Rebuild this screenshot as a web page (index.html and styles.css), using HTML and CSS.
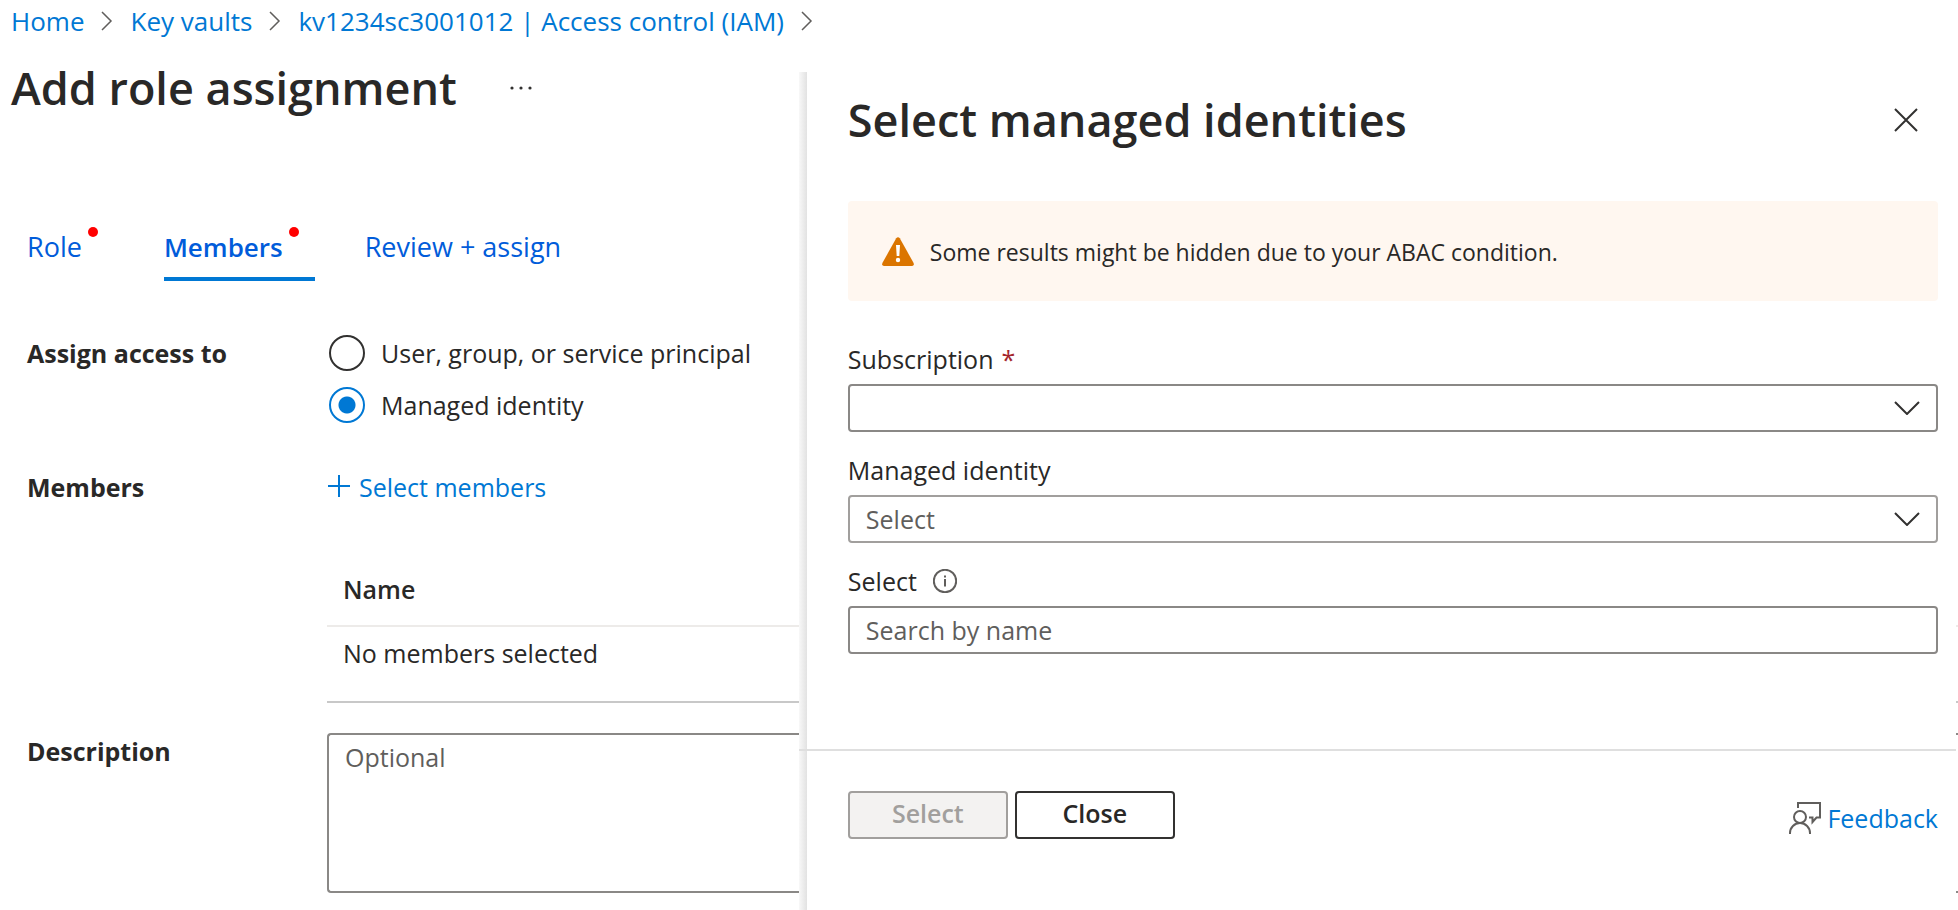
FILE: index.html
```html
<!DOCTYPE html>
<html lang="en">
<head>
<meta charset="utf-8">
<title>Add role assignment</title>
<link rel="stylesheet" href="styles.css">
</head>
<body>
<div class="page">
  <nav class="breadcrumb" aria-label="Breadcrumb">
    <a href="#">Home</a>
    <svg class="crumb-sep" viewBox="0 0 12 20" aria-hidden="true"><path d="M1 1l9 9-9 9"/></svg>
    <a href="#">Key vaults</a>
    <svg class="crumb-sep" viewBox="0 0 12 20" aria-hidden="true"><path d="M1 1l9 9-9 9"/></svg>
    <a href="#">kv1234sc3001012 | Access control (IAM)</a>
    <svg class="crumb-sep" viewBox="0 0 12 20" aria-hidden="true"><path d="M1 1l9 9-9 9"/></svg>
  </nav>

  <header class="page-header">
    <h1 class="title">Add role assignment</h1>
    <button class="icon-button" type="button" aria-label="More">
      <svg class="more-icon" viewBox="0 0 24 4" aria-hidden="true"><circle cx="3" cy="2" r="1.6"/><circle cx="12" cy="2" r="1.6"/><circle cx="21" cy="2" r="1.6"/></svg>
    </button>
  </header>

  <nav class="tabs" aria-label="Steps">
    <a class="tab has-dot" href="#">Role</a>
    <a class="tab has-dot active" href="#">Members</a>
    <a class="tab" href="#">Review + assign</a>
  </nav>

  <main class="form">
    <div class="row row-access">
      <span class="row-label" id="access-label">Assign access to</span>
      <div class="radios" role="radiogroup" aria-labelledby="access-label">
        <label class="radio"><input type="radio" name="access">User, group, or service principal</label>
        <label class="radio"><input type="radio" name="access" checked>Managed identity</label>
      </div>
    </div>
    <div class="row row-members">
      <span class="row-label">Members</span>
      <div class="members">
        <a class="add-link" href="#"><svg class="plus-icon" viewBox="0 0 24 24" aria-hidden="true"><path d="M12 0v22M1 11h22"/></svg>Select members</a>
        <table class="members-table">
          <thead><tr><th>Name</th></tr></thead>
          <tbody><tr><td>No members selected</td></tr></tbody>
        </table>
      </div>
    </div>
    <div class="row">
      <label class="row-label" for="description">Description</label>
      <textarea class="description" id="description" placeholder="Optional"></textarea>
    </div>
  </main>
</div>

<aside class="panel" aria-labelledby="panel-title">
  <div class="panel-body">
    <header class="panel-header">
      <h2 class="title" id="panel-title">Select managed identities</h2>
      <button class="icon-button close-button" type="button" aria-label="Close panel">
        <svg class="close-icon" viewBox="0 0 24 24" aria-hidden="true"><path d="M1 1l22 22M23 1L1 23"/></svg>
      </button>
    </header>
    <div class="banner" role="status">
      <svg class="warning-icon" viewBox="0 0 32 29" aria-hidden="true"><path class="warning-shape" d="M14.200 1.200Q16-.8 17.800 1.200L31.600 26Q32.400 29 30 29H2Q-.4 29 .4 26z"/><path class="warning-mark" d="M14 8h4l-.7 11h-2.600z"/><circle class="warning-mark" cx="16" cy="23" r="2.200"/></svg>
      <span class="banner-text">Some results might be hidden due to your ABAC condition.</span>
    </div>
    <div class="field">
      <label class="field-label" for="subscription">Subscription <span class="required">*</span></label>
      <div class="select-box">
        <select class="control" id="subscription"><option></option></select>
        <svg class="chevron" viewBox="0 0 26 14" aria-hidden="true"><path d="M1 1l12 12L25 1"/></svg>
      </div>
    </div>
    <div class="field">
      <label class="field-label" for="identity">Managed identity</label>
      <div class="select-box">
        <select class="control control-light" id="identity"><option>Select</option></select>
        <svg class="chevron" viewBox="0 0 26 14" aria-hidden="true"><path d="M1 1l12 12L25 1"/></svg>
      </div>
    </div>
    <div class="field">
      <label class="field-label" for="search">Select
        <svg class="info-icon" viewBox="0 0 24 24" aria-hidden="true"><circle cx="12" cy="12" r="11.200"/><path d="M12 10v7.500M12 6.500v2"/></svg>
      </label>
      <input class="control" id="search" type="text" placeholder="Search by name">
    </div>
  </div>
  <footer class="panel-footer">
    <button class="button" type="button" disabled>Select</button>
    <button class="button" type="button">Close</button>
    <a class="feedback" href="#"><svg class="feedback-icon" viewBox="0 0 32 32" aria-hidden="true"><circle cx="11" cy="15" r="6"/><path d="M1 32v-1a10 10 0 0 1 20 0v1M9 6V1h22v14.500h-3.500L23.500 20v-4.500H20"/></svg>Feedback</a>
  </footer>
</aside>
</body>
</html>
```
FILE: styles.css
```css
* {
  box-sizing: border-box;
}

body {
  margin: 0;
  height: 100vh;
  overflow: hidden;
  position: relative;
  background: #fff;
  color: #292827;
  font: 25px/32px "Open Sans", "Noto Sans", sans-serif;
}

a {
  color: #0078d4;
  text-decoration: none;
}

button,
input,
select,
textarea {
  font: inherit;
  color: inherit;
}

svg {
  flex: none;
  fill: none;
  stroke: #323130;
  stroke-width: 2;
}

.breadcrumb {
  display: flex;
  align-items: center;
  gap: 17px;
  padding: 5px 11px;
  font-size: 26px;
}

.crumb-sep {
  width: 12px;
  height: 20px;
  stroke: #605e5c;
  stroke-width: 1.5;
}

.page-header {
  display: flex;
  align-items: center;
  gap: 44px;
  padding: 14px 11px;
}

.title {
  margin: 0;
  font-size: 45px;
  line-height: 64px;
  font-weight: 600;
}

.icon-button {
  display: flex;
  padding: 8px;
  border: 0;
  background: none;
}

.more-icon {
  width: 24px;
  height: 4px;
  fill: #323130;
  stroke: none;
}

.tabs {
  display: flex;
  gap: 50px;
  margin-top: 83px;
  padding: 0 27px;
  font-size: 27px;
}

.tab {
  position: relative;
  padding: 14px 32px 14px 0;
  border-bottom: 4px solid transparent;
  color: #015cda;
}

.has-dot::after {
  content: "";
  position: absolute;
  top: 10px;
  right: 16px;
  width: 10px;
  height: 10px;
  border-radius: 50%;
  background: #f00;
}

.active {
  border-color: #0078d4;
  font-size: 26px;
  font-weight: 600;
}

.form {
  padding: 52px 0 0 27px;
}

.row {
  display: grid;
  grid-template-columns: 300px 1fr;
}

.row-access {
  margin-bottom: 42px;
}

.row-members {
  margin-bottom: 30px;
}

.row-label {
  padding-top: 4px;
  font-weight: 700;
}

.row-members .row-label,
.add-link {
  padding-top: 4px;
}

.radios {
  display: grid;
  gap: 12px;
}

.radio {
  display: flex;
  align-items: center;
  gap: 16px;
  height: 40px;
  padding-left: 2px;
}

.radio input {
  appearance: none;
  width: 36px;
  height: 36px;
  margin: 0;
  border: 2px solid #323130;
  border-radius: 50%;
}

.radio input:checked {
  border-color: #0078d4;
  background: radial-gradient(circle, #0078d4 8px, transparent 9px);
}

.add-link {
  display: flex;
  align-items: center;
  gap: 8px;
}

.plus-icon {
  width: 24px;
  height: 24px;
  stroke: #0078d4;
}

.members-table {
  width: 100%;
  margin-top: 52px;
  border-collapse: collapse;
  text-align: left;
}

.members-table th {
  padding: 18px 16px 20px;
  border-bottom: 2px solid #edebe9;
  font-weight: 600;
}

.members-table td {
  padding: 10px 16px 32px;
  border-bottom: 2px solid #c8c8c8;
}

.row-label[for] {
  padding-top: 2px;
}

.description {
  height: 160px;
  padding: 6px 16px;
  border: 2px solid #8a8886;
  border-right: 0;
  border-radius: 4px 0 0 4px;
  resize: none;
}

::placeholder {
  color: #605e5c;
  opacity: 1;
}

.panel {
  position: absolute;
  top: 72px;
  right: 2px;
  bottom: 0;
  width: 59.1%;
  display: flex;
  flex-direction: column;
  background: linear-gradient(to right, #f8f8f8, #e2e2e2 8px, #fff 8px);
}

.panel-body {
  flex: 1;
  padding: 16px 18px 0 49px;
}

.panel-header {
  display: flex;
  align-items: center;
  justify-content: space-between;
}

.close-button {
  padding: 20px;
}

.close-icon {
  width: 24px;
  height: 24px;
}

.banner {
  display: flex;
  align-items: center;
  gap: 16px;
  min-height: 100px;
  margin: 49px 0 40px;
  padding: 0 34px;
  border-radius: 4px;
  background: #fff7f0;
  font-size: 23px;
}

.banner-text {
  padding-top: 2px;
}

.warning-icon {
  width: 32px;
  height: 29px;
  stroke: none;
}

.warning-shape {
  fill: #db7500;
}

.warning-mark {
  fill: #fff;
}

.field {
  margin-bottom: 20px;
}

.field-label {
  display: flex;
  align-items: center;
  gap: 8px;
  height: 43px;
  padding-bottom: 7px;
}

.required {
  color: #a4262c;
}

.info-icon {
  width: 24px;
  height: 24px;
  margin-left: 8px;
  stroke: #605e5c;
}

.select-box {
  position: relative;
}

.control {
  display: block;
  appearance: none;
  width: 100%;
  height: 48px;
  padding: 0 16px;
  border: 2px solid #8a8886;
  border-radius: 4px;
  background: #fff;
  color: #605e5c;
}

.control-light {
  border-color: #a19f9d;
}

.chevron {
  position: absolute;
  top: 17px;
  right: 18px;
  width: 26px;
  height: 14px;
  pointer-events: none;
}

.panel-footer {
  display: flex;
  align-items: flex-start;
  gap: 7px;
  height: 161px;
  padding: 40px 18px 0 49px;
  border-top: 2px solid #dfdfdf;
}

.button {
  width: 160px;
  height: 48px;
  padding: 0 0 4px;
  border: 2px solid #323130;
  border-radius: 4px;
  background: #fff;
  font-weight: 600;
}

.button:disabled {
  border-color: #a19f9d;
  background: #f3f2f1;
  color: #a19f9d;
}

.feedback {
  display: flex;
  align-items: center;
  gap: 6px;
  margin: 11px 0 0 auto;
}

.feedback-icon {
  width: 32px;
  height: 32px;
  stroke: #605e5c;
}
```
